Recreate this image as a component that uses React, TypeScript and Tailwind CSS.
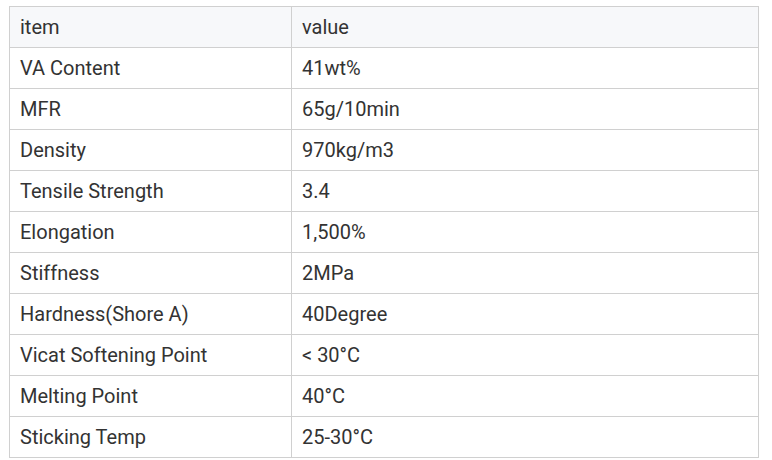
import React from 'react';

const rows: [string, string][] = [
  ['VA Content', '41wt%'],
  ['MFR', '65g/10min'],
  ['Density', '970kg/m3'],
  ['Tensile Strength', '3.4'],
  ['Elongation', '1,500%'],
  ['Stiffness', '2MPa'],
  ['Hardness(Shore A)', '40Degree'],
  ['Vicat Softening Point', '< 30°C'],
  ['Melting Point', '40°C'],
  ['Sticking Temp', '25-30°C'],
];

export default function App() {
  return (
    <div className="w-[772px] h-[460px] bg-white pl-[9px] pt-[6px] font-['Roboto',sans-serif] text-[#333]">
      <table className="w-[750px] border-collapse text-[20px] leading-none">
        <thead>
          <tr className="bg-[#f7f8fa] h-[41px]">
            <th className="w-[282px] border border-[#d0d0d0] px-[10px] text-left font-normal">item</th>
            <th className="border border-[#d0d0d0] px-[10px] text-left font-normal">value</th>
          </tr>
        </thead>
        <tbody>
          {rows.map(([k, v]) => (
            <tr key={k} className="h-[41px]">
              <td className="border border-[#d0d0d0] px-[10px]">{k}</td>
              <td className="border border-[#d0d0d0] px-[10px]">{v}</td>
            </tr>
          ))}
        </tbody>
      </table>
    </div>
  );
}
